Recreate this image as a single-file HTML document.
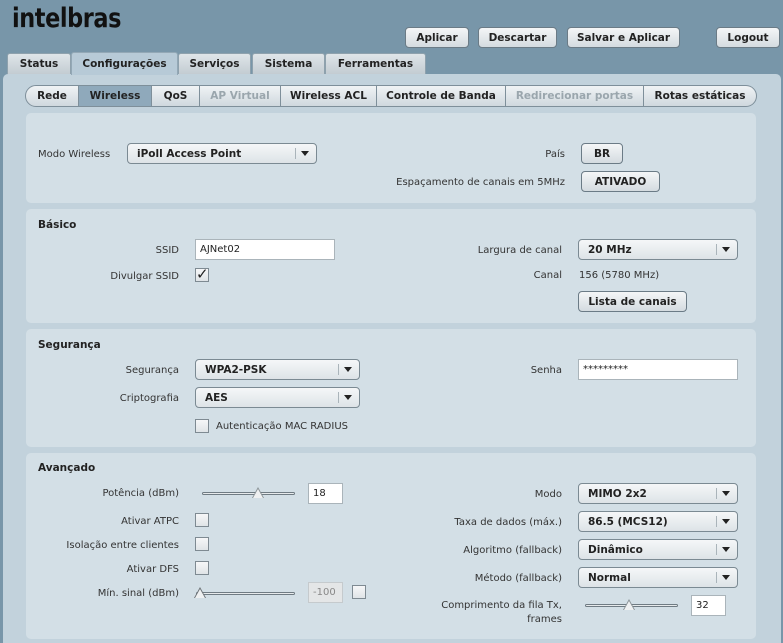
<!DOCTYPE html>
<html><head><meta charset="utf-8"><style>
*{margin:0;padding:0;box-sizing:border-box}
body{width:783px;height:643px;overflow:hidden;background:#7896a9;font-family:"DejaVu Sans","Liberation Sans",sans-serif;font-size:10px;color:#222;position:relative}
.a{position:absolute}
.logo{left:12px;top:3px;font-size:27px;font-weight:900;color:#111;letter-spacing:-0.5px;font-family:"DejaVu Sans",sans-serif;transform:scaleX(0.83);transform-origin:0 0}
.btn{position:absolute;height:21px;border:1px solid #6b7b86;border-radius:4px;background:linear-gradient(#f4f6f7,#d4dbe0);font-weight:bold;font-size:10.5px;text-align:center;line-height:20px;color:#222}
.tab{position:absolute;top:53px;height:21px;background:linear-gradient(#dfe5e9,#c3ccd2);border:1px solid #8ea1ad;border-bottom:none;border-radius:3px 3px 0 0;font-weight:bold;font-size:10.5px;text-align:center;line-height:21px}
.tab.on{background:#b7cad7;top:52px;height:23px;line-height:23px}
.content{left:3px;top:74px;width:778px;height:569px;background:#c2d2dc;border-radius:5px 5px 0 0}
.sub{position:absolute;top:85px;height:22px;border:1px solid #7e8f9a;border-left:none;background:linear-gradient(#f0f3f5,#cfd8de);font-weight:bold;font-size:10.5px;text-align:center;line-height:21px}
.sub.on{background:#8fa9bb}
.sub.dis{color:#9aa6ad}
.panel{position:absolute;left:26px;width:730px;background:#d3dfe6;border-radius:5px}
.h{position:absolute;font-weight:bold;font-size:10.5px;margin-top:1px}
.l{position:absolute;text-align:right;color:#333;margin-top:1px}
.t{position:absolute;color:#333;margin-top:1px}
.sel{position:absolute;height:21px;border:1px solid #7b8a93;border-radius:4px;background:linear-gradient(#f5f7f8,#dde3e7);font-weight:bold;font-size:10.5px;line-height:20px;padding-left:9px}
.sel:after{content:"";position:absolute;right:20px;top:4px;height:11px;border-left:1px solid #aab4ba}
.sel i{position:absolute;right:7px;top:7px;width:0;height:0;border-left:4px solid transparent;border-right:4px solid transparent;border-top:5px solid #222}
.inp{position:absolute;height:21px;background:#fff;border:1px solid #aab4ba;padding-left:4px;line-height:20px;font-size:10px}
.cb{position:absolute;width:14px;height:14px;border:1px solid #7e8a92;background:linear-gradient(#f6f7f8,#dfe4e7)}
.sl{position:absolute;height:3px;border:1px solid #6f7b83;border-radius:2px;background:#e6eaec}
.th{position:absolute;width:0;height:0;border-left:6px solid transparent;border-right:6px solid transparent;border-bottom:11px solid #8a9296}
.th:after{content:"";position:absolute;left:-5px;top:1.5px;border-left:5px solid transparent;border-right:5px solid transparent;border-bottom:9px solid #eef0f1}
</style></head><body>
<div class="a logo">intelbras</div>
<div class="btn" style="left:405px;top:27px;width:64px">Aplicar</div>
<div class="btn" style="left:478px;top:27px;width:79px">Descartar</div>
<div class="btn" style="left:567px;top:27px;width:113px">Salvar e Aplicar</div>
<div class="btn" style="left:716px;top:27px;width:64px">Logout</div>

<div class="tab" style="left:7px;width:64px">Status</div>
<div class="tab" style="left:178px;width:73px">Serviços</div>
<div class="tab" style="left:252px;width:73px">Sistema</div>
<div class="tab" style="left:325px;width:101px">Ferramentas</div>
<div class="a content"></div>
<div class="tab on" style="left:71px;width:107px;border-color:#93a8b6">Configurações</div>

<div class="sub" style="left:25px;width:54px;border-left:1px solid #7e8f9a;border-radius:11px 0 0 11px">Rede</div>
<div class="sub on" style="left:79px;width:73px">Wireless</div>
<div class="sub" style="left:152px;width:48px">QoS</div>
<div class="sub dis" style="left:200px;width:81px">AP Virtual</div>
<div class="sub" style="left:281px;width:96px">Wireless ACL</div>
<div class="sub" style="left:377px;width:129px">Controle de Banda</div>
<div class="sub dis" style="left:506px;width:138px">Redirecionar portas</div>
<div class="sub" style="left:644px;width:113px;border-radius:0 11px 11px 0">Rotas estáticas</div>

<div class="panel" style="top:113px;height:90px"></div>
<div class="t" style="left:38px;top:148px">Modo Wireless</div>
<div class="sel" style="left:127px;top:143px;width:190px">iPoll Access Point<i></i></div>
<div class="l" style="left:400px;width:165px;top:148px">País</div>
<div class="btn" style="left:581px;top:143px;width:42px">BR</div>
<div class="l" style="left:360px;width:205px;top:176px">Espaçamento de canais em 5MHz</div>
<div class="btn" style="left:581px;top:171px;width:79px">ATIVADO</div>

<div class="panel" style="top:209px;height:114px"></div>
<div class="h" style="left:38px;top:218px">Básico</div>
<div class="l" style="left:60px;width:119px;top:244px">SSID</div>
<div class="inp" style="left:195px;top:239px;width:140px">AJNet02</div>
<div class="l" style="left:60px;width:119px;top:270px">Divulgar SSID</div>
<div class="cb" style="left:195px;top:268px;font-size:15px;line-height:11px;text-align:center;font-weight:bold">✓</div>
<div class="l" style="left:400px;width:162px;top:244px">Largura de canal</div>
<div class="sel" style="left:578px;top:239px;width:160px">20 MHz<i></i></div>
<div class="l" style="left:400px;width:162px;top:269px">Canal</div>
<div class="t" style="left:579px;top:269px">156 (5780 MHz)</div>
<div class="btn" style="left:578px;top:291px;width:109px">Lista de canais</div>

<div class="panel" style="top:329px;height:118px"></div>
<div class="h" style="left:38px;top:338px">Segurança</div>
<div class="l" style="left:60px;width:119px;top:364px">Segurança</div>
<div class="sel" style="left:195px;top:359px;width:165px">WPA2-PSK<i></i></div>
<div class="l" style="left:60px;width:119px;top:392px">Criptografia</div>
<div class="sel" style="left:195px;top:387px;width:165px">AES<i></i></div>
<div class="cb" style="left:195px;top:419px"></div>
<div class="t" style="left:216px;top:420px">Autenticação MAC RADIUS</div>
<div class="l" style="left:400px;width:162px;top:364px">Senha</div>
<div class="inp" style="left:578px;top:359px;width:160px">*********</div>

<div class="panel" style="top:453px;height:186px"></div>
<div class="h" style="left:38px;top:461px">Avançado</div>
<div class="l" style="left:40px;width:139px;top:487px">Potência (dBm)</div>
<div class="sl" style="left:202px;top:492px;width:93px"></div>
<div class="th" style="left:252px;top:487px"></div>
<div class="inp" style="left:308px;top:483px;width:35px">18</div>
<div class="l" style="left:40px;width:139px;top:515px">Ativar ATPC</div>
<div class="cb" style="left:195px;top:513px"></div>
<div class="l" style="left:40px;width:139px;top:539px">Isolação entre clientes</div>
<div class="cb" style="left:195px;top:537px"></div>
<div class="l" style="left:40px;width:139px;top:563px">Ativar DFS</div>
<div class="cb" style="left:195px;top:561px"></div>
<div class="l" style="left:40px;width:139px;top:587px">Mín. sinal (dBm)</div>
<div class="sl" style="left:196px;top:592px;width:99px"></div>
<div class="th" style="left:194px;top:587px;border-bottom-color:#6a7074"></div>
<div class="inp" style="left:308px;top:582px;width:35px;background:#e4e6e7;color:#888;border-color:#c5cacd">-100</div>
<div class="cb" style="left:352px;top:585px"></div>
<div class="l" style="left:400px;width:162px;top:488px">Modo</div>
<div class="sel" style="left:578px;top:483px;width:160px">MIMO 2x2<i></i></div>
<div class="l" style="left:400px;width:162px;top:516px">Taxa de dados (máx.)</div>
<div class="sel" style="left:578px;top:511px;width:160px">86.5 (MCS12)<i></i></div>
<div class="l" style="left:400px;width:162px;top:544px">Algoritmo (fallback)</div>
<div class="sel" style="left:578px;top:539px;width:160px">Dinâmico<i></i></div>
<div class="l" style="left:400px;width:162px;top:572px">Método (fallback)</div>
<div class="sel" style="left:578px;top:567px;width:160px">Normal<i></i></div>
<div class="l" style="left:400px;width:162px;top:598px;line-height:14px">Comprimento da fila Tx,<br>frames</div>
<div class="sl" style="left:585px;top:604px;width:93px"></div>
<div class="th" style="left:623px;top:599px"></div>
<div class="inp" style="left:691px;top:595px;width:35px">32</div>
</body></html>
